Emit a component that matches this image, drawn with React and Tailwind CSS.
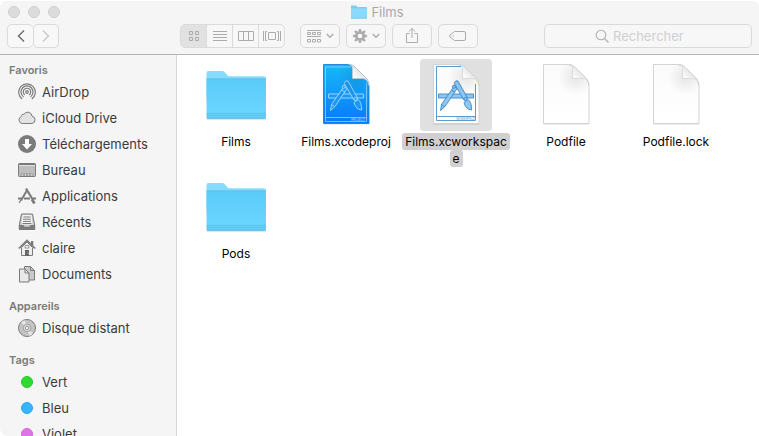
import React from "react";

const gray = "#7b7b7b";

function FolderArt({ id }) {
  return (
    <svg viewBox="0 0 72 72" className="size-full" aria-hidden="true">
      <defs>
        <linearGradient id={id} x1="0" y1="0" x2="0" y2="1">
          <stop offset="0" stopColor="#5acbf8" />
          <stop offset="0.8" stopColor="#68d4ff" />
          <stop offset="1" stopColor="#62cffb" />
        </linearGradient>
      </defs>
      <path d="M6.500 60h59.500" stroke="#b9c4c9" strokeWidth="1" opacity="0.8" />
      <path d="M6.500 14q0-2 2-2h13.500q1.500 0 2.500 1l3 3.500q.8.700 2 .700H64q2 0 2 2V40H6.500z" fill="#86dcfd" />
      <path d="M6.500 19.800h59.500V58q0 1.500-1.500 1.500H8Q6.500 59.500 6.500 58z" fill={`url(#${id})`} />
      <path d="M6.500 19.800h59.500" stroke="#5bbde6" strokeWidth="0.700" />
      <path d="M6.500 54.500h59.500M6.500 56.500h59.500" stroke="#4fb9e8" strokeWidth="0.600" />
      <path d="M7 59.200h58.500" stroke="#48acd9" strokeWidth="0.800" />
    </svg>
  );
}

function Tools({ stroke, fill }) {
  return (
    <g stroke={stroke} fill={fill} strokeWidth="0.900" strokeLinejoin="round">
      <rect x="18.500" y="35" width="35" height="4" />
      <path d="M34 27.500l3.200 1.800L25 47.500l-4.500 4L21.500 45.500z" />
      <path d="M21.500 45.500l3.200 2M31.500 31l3.400 2" fill="none" />
      <path d="M34.500 23.500q1-2.500 3.500-1.500L47.500 39l-3.500 2.200L34.300 24.500z" />
      <path d="M44 43.500l4.200-3q3.500 3 3.500 10.500-6-.5-7.700-7.500z" />
      <circle cx="45.500" cy="40" r="1.600" />
      <circle cx="33.800" cy="27.800" r="1.500" />
    </g>
  );
}

function DocumentArt({ id, kind }) {
  const project = kind === "project";
  const workspace = kind === "workspace";
  return (
    <svg viewBox="0 0 72 72" className="size-full" aria-hidden="true">
      <defs>
        <linearGradient id={`${id}-page`} x1="0" y1="0" x2="0" y2="1">
          <stop offset="0" stopColor={project ? "#18b8f7" : "#fbfbfb"} />
          <stop offset="1" stopColor={project ? "#0878fb" : "#ffffff"} />
        </linearGradient>
        <linearGradient id={`${id}-fold`} x1="0" y1="1" x2="0.700" y2="0.300">
          <stop offset="0" stopColor="#ffffff" />
          <stop offset="0.500" stopColor="#fafafa" />
          <stop offset="1" stopColor="#dedede" />
        </linearGradient>
        <radialGradient id={`${id}-shade`} cx="46" cy="18" r="18" gradientUnits="userSpaceOnUse">
          <stop offset="0" stopColor="#000" stopOpacity="0.090" />
          <stop offset="1" stopColor="#000" stopOpacity="0" />
        </radialGradient>
      </defs>
      <path d="M13.500 65h45.500" stroke="#000" strokeOpacity="0.150" strokeWidth="1" />
      <path
        d="M13.500 5.500H37q5.500 0 8.500 3L56 19q3 3 3 8.500v37H13.500z"
        fill={`url(#${id}-page)`}
        stroke={project ? "#1685d6" : "#cfcfcf"}
        strokeWidth="0.900"
      />
      {project && (
        <g fill="none" stroke="#a5dcff" strokeWidth="0.700">
          <path d="M15.500 8V62.500H56.500V24M15.500 8H41M15.500 58.500H56.500" />
        </g>
      )}
      {workspace && (
        <g fill="none" stroke="#4d8fc7" strokeWidth="0.900">
          <path d="M16.500 7.500V61.500H55.500V25M16.500 7.500H41M16.500 57.500H55.500" />
        </g>
      )}
      {project && <Tools stroke="#a9dcff" fill="#1b97f8" />}
      {workspace && <Tools stroke="#3f86c4" fill="#8cc8f5" />}
      {(project || workspace) && (
        <text
          x="55"
          y={project ? 62 : 61}
          textAnchor="end"
          fontSize="3"
          fontFamily="Inter, sans-serif"
          fill={project ? "#b9e2ff" : "#4d8fc7"}
        >
          {project ? "PROJECT" : "WORKSPACE"}
        </text>
      )}
      <path d="M28 5.900h10q4.500 0 7.500 3L56 19.400q2.500 3 2.600 8V38H28z" fill={`url(#${id}-shade)`} />
      <path
        d="M39 5.500q4 .5 3.500 5.500v8.500H52q5.500-.2 7 7 0-4.500-3-7.500L45.500 8.500q-3-3-6.500-3z"
        fill={`url(#${id}-fold)`}
        stroke="#cccccc"
        strokeWidth="0.600"
      />
    </svg>
  );
}

const sidebarArt = {
  airdrop: (
    <g fill="none" stroke={gray} strokeWidth="1.200">
      <path d="M4.200 16A8.300 8.300 0 1 1 13.800 16" />
      <path d="M5.600 13.900A6 6 0 1 1 12.400 13.900" />
      <path d="M6.800 11.900A3.700 3.700 0 1 1 11.200 11.900" />
      <circle cx="9" cy="9" r="1.300" />
    </g>
  ),
  cloud: (
    <path
      d="M4.300 14.500A3.600 3.600 0 0 1 3.200 7.600 2.300 2.300 0 0 1 6 5.300 4.300 4.300 0 0 1 14 7.200 3.700 3.700 0 0 1 14 14.500z"
      fill="#e2e2e2"
      stroke={gray}
    />
  ),
  download: (
    <g>
      <circle cx="9" cy="9" r="9" fill={gray} />
      <path d="M7 4h4v5h3l-5 5.500L4 9h3z" fill="#fff" />
    </g>
  ),
  desktop: (
    <g>
      <rect x="0.500" y="2.500" width="17" height="13" rx="0.800" fill="#bdbdbd" stroke={gray} />
      <path d="M1 3.500h16" stroke="#777" strokeWidth="1" />
      <path d="M1 4.500h16" stroke="#e4e4e4" strokeWidth="1" />
      <path d="M3 15v-2h12v2z" fill="#eee" stroke={gray} strokeWidth="0.600" />
      <path d="M6 13v2M9 13v2M12 13v2" stroke={gray} />
    </g>
  ),
  apps: (
    <g fill="none" stroke={gray}>
      <path d="M0 11.500h3.500M6 11.500h6M15 11.500h3" strokeWidth="2" />
      <path d="M9.500 2.500L3 13.500" strokeWidth="2" />
      <path d="M2.800 13l-1.500 3" strokeWidth="1.200" />
      <path d="M8 1.500l7 11.500" strokeWidth="2.200" />
      <path d="M14 12.500l2.500 4" strokeWidth="2.800" />
    </g>
  ),
  recents: (
    <g>
      <path d="M3.500 1h11l2.200 11v4.500H1.300V12z" fill="#c9c9c9" stroke={gray} />
      <path d="M4.500 2h9l1 9.500h-11z" fill="#f5f5f5" />
      <path d="M5.500 4h7M5 6.200h8M5 8.400h8M4.500 10.500h9" stroke={gray} />
      <path d="M1 12h4.500l1 1.700h5l1-1.700H17v5H1z" fill={gray} />
    </g>
  ),
  home: (
    <g>
      <path d="M13 2h2.300v5H13z" fill={gray} />
      <path d="M3.500 8.500L9 3l5.500 5.500v8h-11z" fill="#eee" stroke={gray} />
      <path d="M0.800 9.500L9 1.500l8.200 8" fill="none" stroke={gray} strokeWidth="1.700" />
      <path d="M7.200 6.500h3.600V9H7.200z" fill="#fff" stroke={gray} strokeWidth="0.800" />
      <path d="M7 11h4v6H7z" fill="#666" />
      <path d="M9.500 14h1" stroke="#ddd" />
    </g>
  ),
  documents: (
    <g stroke={gray} strokeLinejoin="round">
      <path d="M6.500 1.500h6l4 4v9.500h-10z" fill="#c9c9c9" />
      <path d="M12.500 1.500v4h4" fill="none" />
      <path d="M1.500 4h5.500l4 4v9h-9.500z" fill="#e8e8e8" />
      <path d="M7 4v4h4" fill="none" />
    </g>
  ),
  disc: (
    <g>
      <circle cx="9" cy="9" r="8.500" fill="#c4c4c4" stroke={gray} />
      <path d="M9 9L3 3.500A8 8 0 0 1 7 1.300zM9 9l6 5.500a8 8 0 0 1-4 2.200z" fill="#e4e4e4" />
      <circle cx="9" cy="9" r="3.800" fill="#d9d9d9" stroke="#999" strokeWidth="0.800" />
      <circle cx="9" cy="9" r="1.700" fill="#f5f5f5" stroke="#888" strokeWidth="0.800" />
    </g>
  ),
  green: <circle cx="9" cy="9" r="5.500" fill="#30d92f" stroke="#22cc22" />,
  blue: <circle cx="9" cy="9" r="5.500" fill="#36b5fb" stroke="#27a8f3" />,
  purple: <circle cx="9" cy="9" r="5.500" fill="#dd75e6" stroke="#d466dd" />,
};

const sections = [
  {
    title: "Favoris",
    items: [
      ["AirDrop", "airdrop"],
      ["iCloud Drive", "cloud"],
      ["Téléchargements", "download"],
      ["Bureau", "desktop"],
      ["Applications", "apps"],
      ["Récents", "recents"],
      ["claire", "home"],
      ["Documents", "documents"],
    ],
  },
  { title: "Appareils", items: [["Disque distant", "disc"]] },
  {
    title: "Tags",
    items: [
      ["Vert", "green"],
      ["Bleu", "blue"],
      ["Violet", "purple"],
    ],
  },
];

const files = [
  { name: "Films", kind: "folder" },
  { name: "Films.xcodeproj", kind: "project" },
  { name: "Films.xcworkspace", kind: "workspace", selected: true },
  { name: "Podfile", kind: "plain" },
  { name: "Podfile.lock", kind: "plain" },
  { name: "Pods", kind: "folder" },
];

const views = [
  {
    label: "Icônes",
    active: true,
    art: <path d="M5.500 3.500h3v3h-3zM11.500 3.500h3v3h-3zM5.500 9.500h3v3h-3zM11.500 9.500h3v3h-3z" />,
  },
  { label: "Liste", art: <path d="M3 3.500h14M3 6.500h14M3 9.500h14M3 12.500h14" /> },
  { label: "Colonnes", art: <path d="M2.500 3.500h15v9h-15zM7.500 3.500v9M12.500 3.500v9" /> },
  {
    label: "Cover Flow",
    art: <path d="M6.500 4.500h7v7h-7zM1.500 3v10M18.500 3v10M5 3.500H3.500v9H5M15 3.500h1.500v9H15" />,
  },
];

const toolButton =
  "flex h-6 w-10 items-center justify-center rounded-[5px] border border-[#dadada] bg-[#f7f7f7] text-[#acacac]";

function Glyph({ children }) {
  return (
    <svg viewBox="0 0 20 16" className="h-4 w-5 shrink-0" fill="none" stroke="currentColor" aria-hidden="true">
      {children}
    </svg>
  );
}

function Chevron() {
  return (
    <svg viewBox="0 0 8 6" className="h-1.5 w-2 shrink-0" fill="none" stroke="currentColor" strokeWidth="1.400" aria-hidden="true">
      <path d="M0.800 1l3.200 3.200L7.200 1" />
    </svg>
  );
}

function Gear() {
  const teeth = [0, 45, 90, 135, 180, 225, 270, 315];
  return (
    <svg viewBox="0 0 16 16" className="size-4 shrink-0" aria-hidden="true">
      <circle cx="8" cy="8" r="3.700" fill="none" stroke="currentColor" strokeWidth="2.800" />
      {teeth.map((angle) => (
        <path key={angle} d="M6.600 3.500l.4-2.600h2l.4 2.600z" fill="currentColor" transform={`rotate(${angle} 8 8)`} />
      ))}
    </svg>
  );
}

function Toolbar() {
  return (
    <div className="flex h-6 items-stretch pr-[7px] pl-[7px]">
      <div className="flex w-[173px] shrink-0">
        <button aria-label="Précédent" className="flex w-[26px] items-center justify-center rounded-[5px] border border-r-0 border-[#dadada] bg-[#f8f8f8] text-[#707070]">
          <svg viewBox="0 0 8 14" className="h-3.5 w-2" fill="none" stroke="currentColor" strokeWidth="1.500" aria-hidden="true">
            <path d="M7 1.500L1.500 7 7 12.500" />
          </svg>
        </button>
        <button aria-label="Suivant" className="flex w-[26px] items-center justify-center rounded-[5px] border border-[#dadada] bg-[#f8f8f8] text-[#c8c8c8]">
          <svg viewBox="0 0 8 14" className="h-3.5 w-2" fill="none" stroke="currentColor" strokeWidth="1.400" aria-hidden="true">
            <path d="M1 1.500L6.500 7 1 12.500" />
          </svg>
        </button>
      </div>
      <div className="flex w-[105px] shrink-0 divide-x divide-[#dadada] overflow-hidden rounded-[5px] border border-[#dadada] bg-[#f7f7f7] text-[#acacac]">
        {views.map((view) => (
          <button
            key={view.label}
            aria-label={view.label}
            aria-pressed={!!view.active}
            className={`flex flex-1 items-center justify-center ${view.active ? "bg-[#e1e1e1]" : ""}`}
          >
            <Glyph>{view.art}</Glyph>
          </button>
        ))}
      </div>
      <div className="ml-[15px] flex shrink-0 gap-1.5">
        <button aria-label="Grouper" className={`${toolButton} gap-1`}>
          <svg viewBox="0 0 16 16" className="size-4 shrink-0" fill="none" stroke="currentColor" aria-hidden="true">
            <path d="M1 2.500h14M1 8.500h14M1.500 4.500h3v2h-3zM6.500 4.500h3v2h-3zM11.500 4.500h3v2h-3zM1.500 11.500h3v2.500h-3zM6.500 11.500h3v2.500h-3zM11.500 11.500h3v2.500h-3z" />
          </svg>
          <Chevron />
        </button>
        <button aria-label="Actions" className={`${toolButton} gap-1`}>
          <Gear />
          <Chevron />
        </button>
        <button aria-label="Partager" className={toolButton}>
          <svg viewBox="0 0 16 18" className="h-[18px] w-4" fill="none" stroke="currentColor" aria-hidden="true">
            <path d="M5.500 6.500h-3v9h11v-9h-3M8 11V1.500M5 4.500l3-3 3 3" />
          </svg>
        </button>
        <button aria-label="Modifier les tags" className={toolButton}>
          <Glyph>
            <path d="M6.500 3.500H16q1.500 0 1.500 1.500v6q0 1.500-1.500 1.500H6.500L2 9q-1-1 0-2z" />
            <path d="M4.500 8h1.500" />
          </Glyph>
        </button>
      </div>
      <label className="ml-auto flex w-[208px] items-center justify-center gap-1 rounded-[5px] border border-[#dadada] bg-[#f7f7f7] pl-1">
        <svg viewBox="0 0 14 14" className="size-3.5 shrink-0 text-[#b0b0b0]" fill="none" stroke="currentColor" strokeWidth="1.100" aria-hidden="true">
          <circle cx="6" cy="6" r="4.800" />
          <path d="M9.500 9.500l4 4" />
        </svg>
        <input
          type="text"
          aria-label="Rechercher"
          placeholder="Rechercher"
          className="w-[92px] bg-transparent text-[13px] leading-4 outline-none placeholder:text-[#d0d0d0]"
        />
      </label>
    </div>
  );
}

export default function App() {
  return (
    <div className="flex h-screen flex-col overflow-hidden rounded-lg bg-white font-['Inter','Liberation_Sans',sans-serif] text-[13px] leading-4">
      <header className="mt-px shrink-0 border-b border-[#b4b4b4] bg-[#f5f5f5] pb-1.5">
        <div className="flex h-[23px] items-center px-2 pb-0.5">
          <div className="flex flex-1 gap-2">
            {["Fermer", "Réduire", "Agrandir"].map((label) => (
              <button key={label} aria-label={label} className="size-3 rounded-full border border-[#cfcfcf] bg-[#dcdcdc]" />
            ))}
          </div>
          <h1 className="flex items-center gap-1 pr-1 text-[#a8a8a8]">
            <svg viewBox="0 0 16 14" className="h-3.5 w-4" aria-hidden="true">
              <path d="M0 1.200Q0 .5.700.5H5l1.500 1.500H15.300q.7 0 .7.700V8H0z" fill="#7fcdf2" />
              <path d="M0 3.500h16v9.300q0 .7-.7.700H.7Q0 13.500 0 12.800z" fill="#8adafd" />
              <path d="M0 13.200h16" stroke="#6fbbe0" strokeWidth="0.700" />
            </svg>
            Films
          </h1>
          <div className="flex-1" />
        </div>
        <Toolbar />
      </header>

      <div className="flex min-h-0 flex-1">
        <nav className="w-[177px] shrink-0 overflow-hidden border-r border-[#d9d9d9] bg-[#f5f5f5] pt-1.5">
          {sections.map((section) => (
            <section key={section.title} className="mb-2.5">
              <h2 className="pl-[9px] text-[11px] leading-[18px] font-semibold text-[#7a7a7a]">{section.title}</h2>
              <ul>
                {section.items.map(([name, art]) => (
                  <li key={name}>
                    <a href="#" className="flex h-[26px] items-center gap-1.5 pl-[18px] text-[#3b3b3b]">
                      <svg viewBox="0 0 18 18" className="size-[18px] shrink-0" aria-hidden="true">
                        {sidebarArt[art]}
                      </svg>
                      {name}
                    </a>
                  </li>
                ))}
              </ul>
            </section>
          ))}
        </nav>

        <main className="min-w-0 flex-1 overflow-hidden pt-1 pl-1">
          <ul className="flex flex-wrap">
            {files.map((file, i) => (
              <li key={file.name} className="h-28 w-[110px]">
                <button className="flex w-full flex-col items-center gap-0.5">
                  <span className={`size-[72px] rounded-[4px] ${file.selected ? "bg-[#e0e0e0]" : ""}`}>
                    {file.kind === "folder" ? (
                      <FolderArt id={`file-${i}`} />
                    ) : (
                      <DocumentArt id={`file-${i}`} kind={file.kind} />
                    )}
                  </span>
                  <span className="w-[108px] text-center text-[12px] leading-[17px] break-all text-black">
                    <span className={`rounded-[3px] box-decoration-clone px-[3px] py-px ${file.selected ? "bg-[#d0d0d0]" : ""}`}>
                      {file.name}
                    </span>
                  </span>
                </button>
              </li>
            ))}
          </ul>
        </main>
      </div>
    </div>
  );
}
